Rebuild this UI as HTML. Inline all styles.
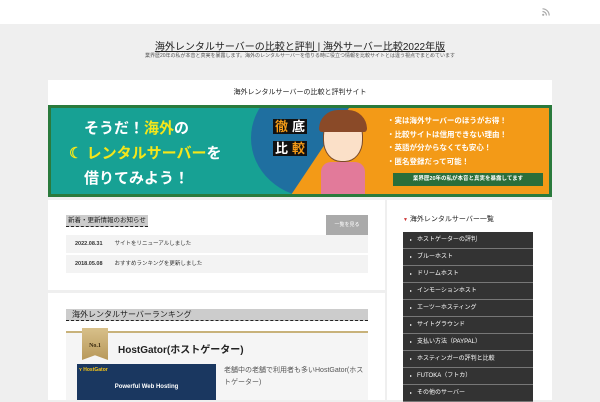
<!DOCTYPE html>
<html><head><meta charset="utf-8"><style>
*{margin:0;padding:0;box-sizing:border-box}
body{width:600px;height:400px;overflow:hidden;background:#efefef;font-family:"Liberation Sans","Noto Sans CJK JP",sans-serif;position:relative;color:#333}
.a{position:absolute;white-space:nowrap}
.top{left:0;top:0;width:600px;height:24px;background:#fff}
.menu div{height:17px;background:#333;border-bottom:1px solid #777;color:#fff;font-size:6px;line-height:16px;padding-left:14px;position:relative}
.menu div:before{content:"";position:absolute;left:7px;top:7px;border-left:2px solid #fff;border-top:1.5px solid transparent;border-bottom:1.5px solid transparent}
</style></head><body>
<div class="a top"></div>
<svg class="a" style="left:542px;top:8px" width="8" height="8" viewBox="0 0 8 8"><circle cx="1.2" cy="6.8" r="1.1" fill="#aaa"/><path d="M0.5 3.5a4 4 0 0 1 4 4M0.5 0.8a6.7 6.7 0 0 1 6.7 6.7" stroke="#aaa" stroke-width="1.2" fill="none"/></svg>
<div class="a" style="left:0;top:38px;width:600px;text-align:center;font-size:10px;color:#222;text-decoration:underline">海外レンタルサーバーの比較と評判 | 海外サーバー比較2022年版</div>
<div class="a" style="left:0;top:52px;width:600px;text-align:center;font-size:5px;color:#555">業界歴20年の私が本音と真実を暴露します。海外のレンタルサーバーを借りる時に役立つ情報を比較サイトとは違う視点でまとめています</div>
<div class="a" style="left:48px;top:80px;width:504px;height:25px;background:#fff;text-align:center;font-size:7px;line-height:25px;color:#222">海外レンタルサーバーの比較と評判サイト</div>
<!-- banner -->
<div class="a" style="left:48px;top:105px;width:504px;height:92px;background:#2a7a3c;overflow:hidden">
 <div class="a" style="left:3px;top:3px;width:498px;height:86px;background:#17a194;overflow:hidden">
  <div class="a" style="left:200px;top:-30px;width:130px;height:120px;border-radius:50%;background:#1f6fa0"></div>
  <div class="a" style="left:238px;top:0;width:300px;height:90px;background:#f39a17;clip-path:polygon(60px 0,100% 0,100% 100%,0 100%)"></div>
  <div class="a" style="left:18px;top:8px;font-size:15px;font-weight:bold;color:#fff;line-height:25px">　そうだ！<span style="color:#f5e61a">海外</span>の<br><span style="color:#f5e61a">☾ レンタルサーバー</span>を<br>　借りてみよう！</div>
  <div class="a" style="left:222px;top:8px;width:40px;font-size:13px;font-weight:bold;line-height:22px;color:#fff"><span style="background:#111;color:#f39a17;padding:0 2px">徹</span><span style="background:#111;padding:0 2px">底</span><br><span style="background:#111;padding:0 2px">比</span><span style="background:#111;color:#f39a17;padding:0 2px">較</span></div>
  <div class="a" style="left:272px;top:6px;width:40px;height:48px;border-radius:45%;background:#fbe0c8;border:1px solid #7a4a2a"></div>
  <div class="a" style="left:268px;top:2px;width:48px;height:22px;border-radius:24px 24px 4px 4px;background:#8a4a28"></div>
  <div class="a" style="left:270px;top:54px;width:44px;height:32px;border-radius:10px 10px 0 0;background:#e27a9a"></div>
  <div class="a" style="left:336px;top:6px;font-size:7.5px;font-weight:bold;color:#fff;line-height:13.5px">・実は海外サーバーのほうがお得！<br>・比較サイトは信用できない理由！<br>・英語が分からなくても安心！<br>・匿名登録だって可能！</div>
  <div class="a" style="left:342px;top:65px;width:150px;height:13px;background:#2a6e3a;color:#fff;font-size:5.5px;line-height:13px;text-align:center;font-weight:bold">業界歴20年の私が本音と真実を暴露してます</div>
 </div>
</div>
<!-- left box 1 -->
<div class="a" style="left:48px;top:200px;width:337px;height:90px;background:#fff"></div>
<div class="a" style="left:66px;top:215px;height:12px;background:#ccc;font-size:6.5px;line-height:12px;color:#222;padding:0 2px;border-bottom:1px dashed #222">新着・更新情報のお知らせ</div>
<div class="a" style="left:326px;top:215px;width:42px;height:20px;background:#aaa;color:#fff;font-size:5px;line-height:20px;text-align:center">一覧を見る</div>
<div class="a" style="left:66px;top:235px;width:302px;height:18px;background:#f3f3f3;font-size:5.5px;line-height:18px"><b style="margin-left:9px;margin-right:12px">2022.08.31</b>サイトをリニューアルしました</div>
<div class="a" style="left:66px;top:255px;width:302px;height:18px;background:#f3f3f3;font-size:5.5px;line-height:18px"><b style="margin-left:9px;margin-right:12px">2018.05.08</b>おすすめランキングを更新しました</div>
<!-- left box 2 -->
<div class="a" style="left:48px;top:293px;width:337px;height:107px;background:#fff"></div>
<div class="a" style="left:66px;top:309px;width:302px;height:12px;background:#ccc;border-bottom:1px dashed #222;font-size:8px;line-height:12px;padding-left:6px;color:#222">海外レンタルサーバーランキング</div>
<div class="a" style="left:66px;top:331px;width:302px;height:69px;background:#f5f5f5;border-top:2px solid #c8b27a"></div>
<div class="a" style="left:82px;top:328px;width:26px;height:32px;background:linear-gradient(#d8c08a,#b8985a);clip-path:polygon(0 0,100% 0,100% 100%,50% 85%,0 100%);color:#3a2a10;font:bold 6px 'Liberation Serif',serif;text-align:center;padding-top:15px">No.1</div>
<div class="a" style="left:118px;top:341px;font-size:10px;font-weight:bold;color:#222">HostGator(ホストゲーター)</div>
<div class="a" style="left:77px;top:364px;width:139px;height:36px;background:#1a3760;color:#fff;text-align:center;font-size:6px;font-weight:bold"><div style="text-align:left;color:#f5c518;font-size:5px;padding:3px 2px">ʏ HostGator</div><div style="margin-top:8px">Powerful Web Hosting</div></div>
<div class="a" style="left:224px;top:365px;width:140px;font-size:7px;line-height:12px;color:#555;white-space:normal">老舗中の老舗で利用者も多いHostGator(ホストゲーター)</div>
<!-- sidebar -->
<div class="a" style="left:387px;top:200px;width:165px;height:200px;background:#fff"></div>
<div class="a" style="left:403px;top:214px;font-size:7px;color:#222"><span style="color:#c33;font-size:5px">▼</span> 海外レンタルサーバー一覧</div>
<div class="a menu" style="left:403px;top:232px;width:130px">
<div>ホストゲーターの評判</div><div>ブルーホスト</div><div>ドリームホスト</div><div>インモーションホスト</div><div>エーツーホスティング</div><div>サイトグラウンド</div><div>支払い方法（PAYPAL）</div><div>ホスティンガーの評判と比較</div><div>FUTOKA（フトカ）</div><div>その他のサーバー</div>
</div>
</body></html>
